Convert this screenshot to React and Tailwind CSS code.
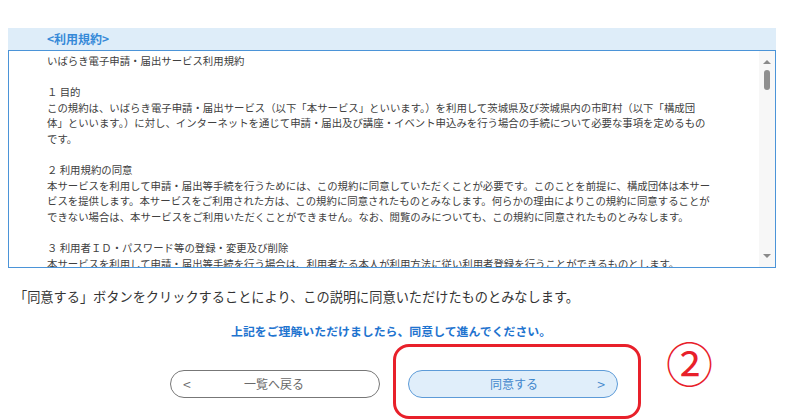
import React from "react";

const terms = [
  "いばらき電子申請・届出サービス利用規約",
  "",
  "１ 目的",
  "この規約は、いばらき電子申請・届出サービス（以下「本サービス」といいます。）を利用して茨城県及び茨城県内の市町村（以下「構成団",
  "体」といいます。）に対し、インターネットを通じて申請・届出及び講座・イベント申込みを行う場合の手続について必要な事項を定めるもの",
  "です。",
  "",
  "２ 利用規約の同意",
  "本サービスを利用して申請・届出等手続を行うためには、この規約に同意していただくことが必要です。このことを前提に、構成団体は本サー",
  "ビスを提供します。本サービスをご利用された方は、この規約に同意されたものとみなします。何らかの理由によりこの規約に同意することが",
  "できない場合は、本サービスをご利用いただくことができません。なお、閲覧のみについても、この規約に同意されたものとみなします。",
  "",
  "３ 利用者ＩＤ・パスワード等の登録・変更及び削除",
  "本サービスを利用して申請・届出等手続を行う場合は、利用者たる本人が利用方法に従い利用者登録を行うことができるものとします。",
];

const App = () => {
  return (
    <div
      className="relative w-[800px] h-[420px] overflow-hidden bg-white pt-[28px]"
      style={{ fontFamily: '"Noto Sans CJK JP", "Noto Sans", sans-serif' }}
    >
      {/* Terms panel */}
      <div className="mx-[8px] w-[768px]">
        <div className="h-[22px] bg-[#deedf9] flex items-center pl-[39px]">
          <span className="text-[12px] font-bold text-[#3589d8] leading-none">
            &lt;利用規約&gt;
          </span>
        </div>
        <div className="h-[218px] border border-[#4b94d8] flex overflow-hidden">
          <div className="flex-1 pl-[38px] pt-[2px] text-[10.4px] leading-[15.6px] text-[#404040] overflow-hidden">
            {terms.map((line, i) => (
              <div key={i} className="h-[15.6px] whitespace-nowrap">
                {line}
              </div>
            ))}
          </div>
          {/* scrollbar */}
          <div className="w-[16px] bg-[#f7f7f7] flex flex-col items-center pt-[9px] pb-[9px]">
            <div className="w-0 h-0 border-l-[4px] border-r-[4px] border-b-[4px] border-l-transparent border-r-transparent border-b-[#8a8a8a]" />
            <div className="mt-[6px] w-[6px] h-[20px] rounded-full bg-[#8f8f8f]" />
            <div className="flex-1" />
            <div className="w-0 h-0 border-l-[4px] border-r-[4px] border-t-[4px] border-l-transparent border-r-transparent border-t-[#8a8a8a]" />
          </div>
        </div>
      </div>

      <p className="mt-[19px] pl-[14px] text-[13.2px] leading-[20px] text-[#333]">
        「同意する」ボタンをクリックすることにより、この説明に同意いただけたものとみなします。
      </p>

      <p className="mt-[15px] pl-[231px] text-[11.9px] leading-[18px] font-bold text-[#1f74cf]">
        上記をご理解いただけましたら、同意して進んでください。
      </p>

      <div className="mt-[30px] pl-[170px] flex gap-[28px]">
        <button className="w-[210px] h-[28px] rounded-full border border-[#777] bg-white flex items-center px-[12px] text-[#6a6a6a]">
          <span className="text-[14px] leading-none">&lt;</span>
          <span className="flex-1 text-center text-[12px] pr-[10px]">一覧へ戻る</span>
        </button>
        <button className="w-[210px] h-[28px] rounded-full border border-[#5d9bd8] bg-[#e0eefa] flex items-center px-[12px] text-[#3f86cc]">
          <span className="flex-1 text-center text-[12px] pl-[10px]">同意する</span>
          <span className="text-[14px] leading-none">&gt;</span>
        </button>
      </div>

      {/* annotation */}
      <div className="absolute left-[393px] top-[344px] w-[248px] h-[75px] border-[3.5px] border-[#e8202a] rounded-[16px]" />
      <div className="absolute left-[666px] top-[338px] text-[47px] leading-none text-[#e8202a]">
        ②
      </div>
    </div>
  );
};

export default App;
